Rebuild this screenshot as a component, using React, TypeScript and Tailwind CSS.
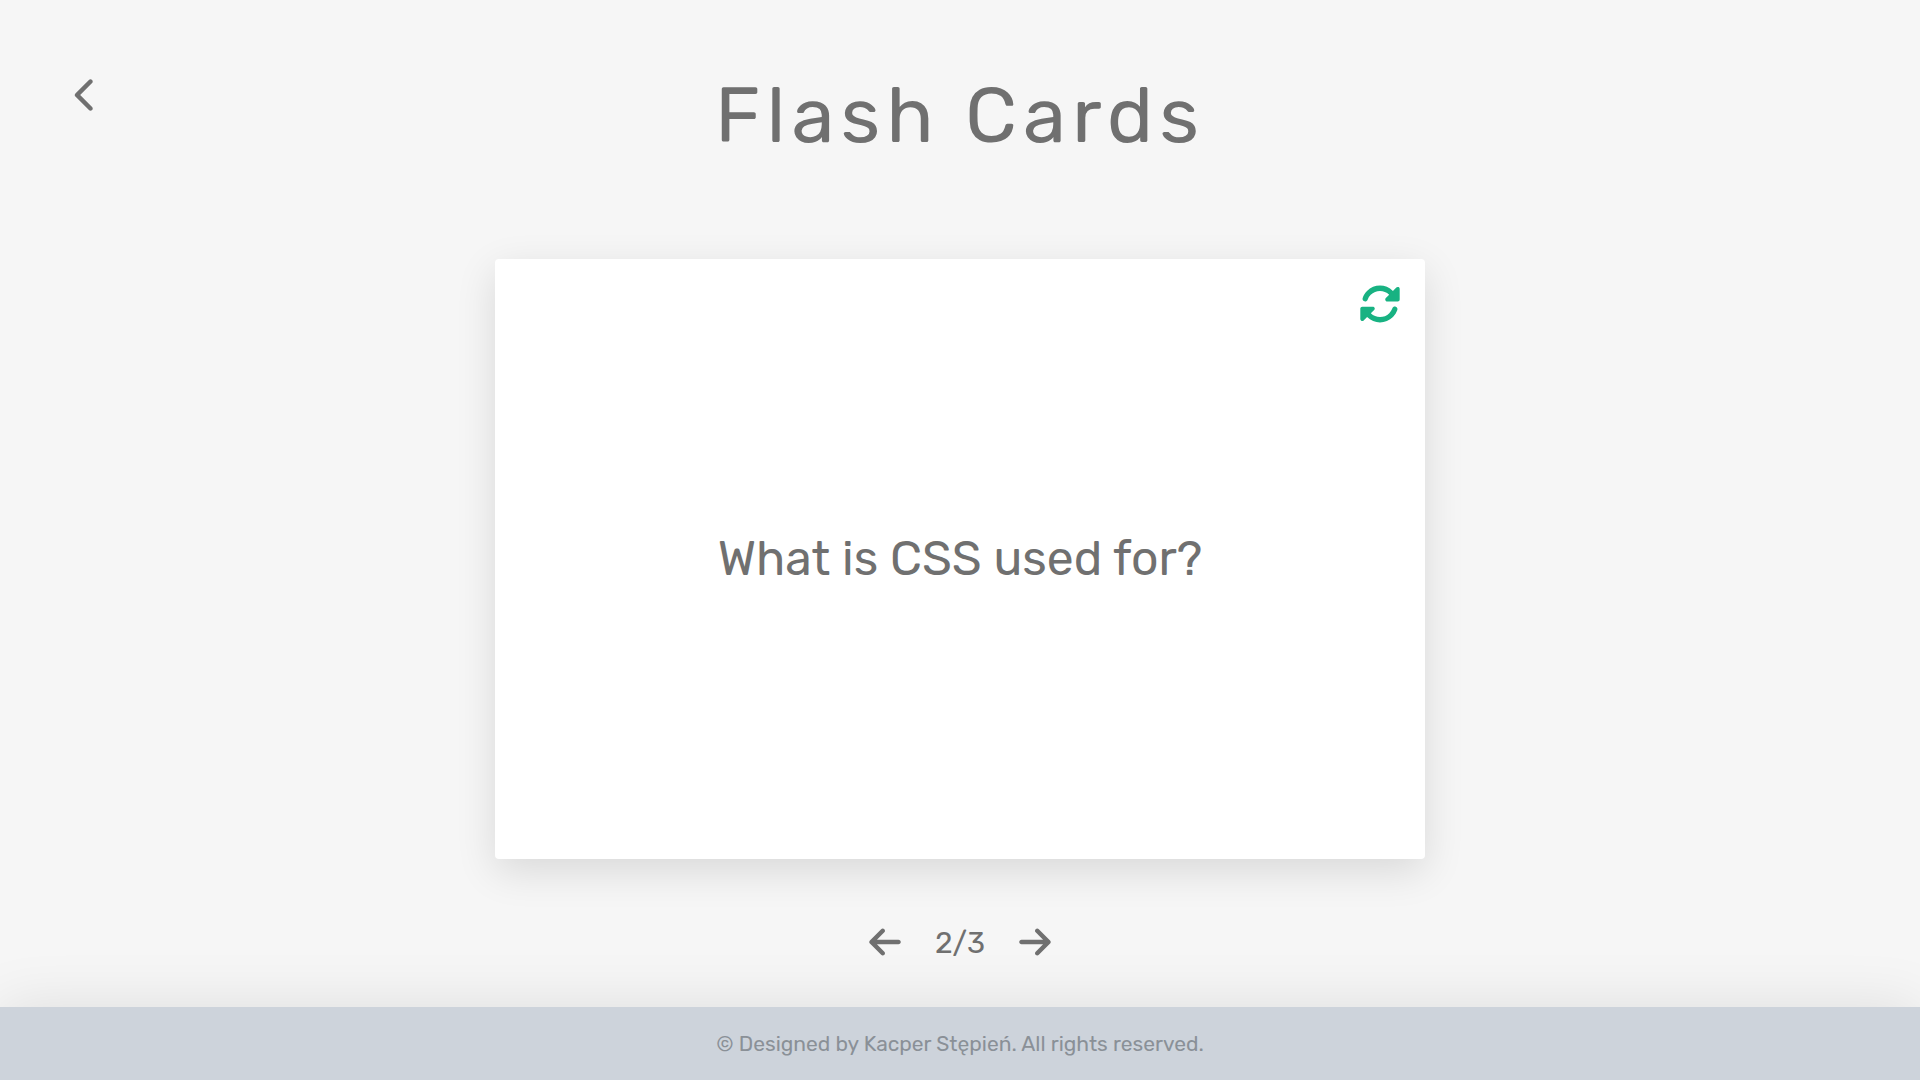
import { useState } from "react";
import { FaArrowLeft, FaArrowRight, FaChevronLeft, FaRotate } from "react-icons/fa6";

const cards = [
  { question: "What is HTML used for?", answer: "Structuring web pages" },
  { question: "What is CSS used for?", answer: "Styling web pages" },
  { question: "What is JavaScript used for?", answer: "Adding behaviour to web pages" },
];

export default function App() {
  const [index, setIndex] = useState(1);
  const [flipped, setFlipped] = useState(false);

  const move = (step: number) => {
    setIndex((index + step + cards.length) % cards.length);
    setFlipped(false);
  };

  return (
    <div className="flex min-h-screen flex-col bg-[#f6f6f6] font-['Rubik','Roboto',sans-serif] text-[#707070]">
      <header className="grid grid-cols-[1fr_auto_1fr] items-start px-16 pt-14">
        <a href="#" aria-label="Back" className="mt-[21px] w-fit px-[10px]">
          <FaChevronLeft className="h-9 w-6" />
        </a>
        <h1 className="text-[78px] leading-[120px] tracking-[6px]">Flash Cards</h1>
      </header>

      <main className="flex grow flex-col items-center px-8 pt-[83px]">
        <section className="relative flex min-h-[600px] w-full max-w-[930px] items-center justify-center rounded-[4px] bg-white p-8 shadow-[0_12px_40px_rgba(0,0,0,0.12)]">
          <button
            type="button"
            aria-label="Flip card"
            onClick={() => setFlipped(!flipped)}
            className="absolute top-6 right-6 cursor-pointer text-[#18b282]"
          >
            <FaRotate className="size-[42px]" />
          </button>
          <p className="text-center text-5xl">
            {flipped ? cards[index].answer : cards[index].question}
          </p>
        </section>

        <nav aria-label="Cards" className="mt-16 flex items-center gap-[34px]">
          <button type="button" aria-label="Previous card" onClick={() => move(-1)} className="cursor-pointer">
            <FaArrowLeft className="h-9 w-8" />
          </button>
          <span className="pt-[2px] text-3xl">
            {index + 1}/{cards.length}
          </span>
          <button type="button" aria-label="Next card" onClick={() => move(1)} className="cursor-pointer">
            <FaArrowRight className="h-9 w-8" />
          </button>
        </nav>
      </main>

      <footer className="bg-[#cdd3db] py-6 text-center text-[21px] leading-[25px] text-[#8a9097] shadow-[0_0_60px_rgba(0,0,0,0.1)]">
        © Designed by Kacper Stępień. All rights reserved.
      </footer>
    </div>
  );
}
